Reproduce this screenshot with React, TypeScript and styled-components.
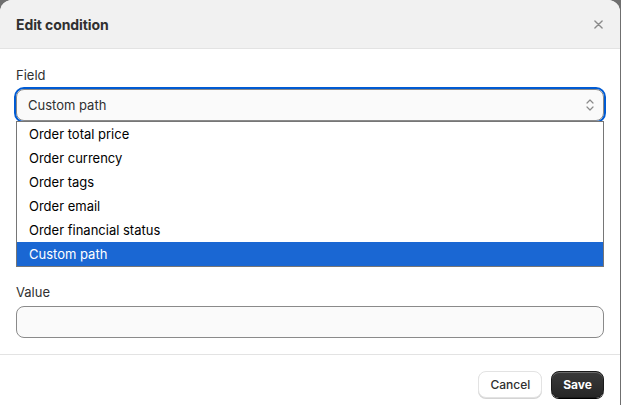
import React, { FC, useState } from 'react'
import styled, { createGlobalStyle } from 'styled-components'

const GlobalStyle = createGlobalStyle`
    html, body {
        margin: 0;
        padding: 0;
        background: #6f6f6f;
        font-family: Inter, "Noto Sans", "Liberation Sans", sans-serif;
        -webkit-font-smoothing: antialiased;
    }
`

const StyledModal = styled.div`
    width: 620px;
    height: 405px;
    background: #ffffff;
    border-radius: 12px 12px 0 0;
    overflow: hidden;
    display: flex;
    flex-direction: column;
    & > * {
        flex-shrink: 0;
    }
`
const StyledHeader = styled.div`
    height: 48px;
    background: #f1f1f1;
    border-bottom: 1px solid #e3e3e3;
    display: flex;
    align-items: center;
    justify-content: space-between;
    padding: 0 16px;
    box-sizing: content-box;
`
const StyledTitle = styled.h2`
    margin: 0;
    font-size: 14px;
    font-weight: 700;
    color: #303030;
    letter-spacing: -0.1px;
`
const StyledClose = styled.button`
    width: 20px;
    height: 20px;
    border: none;
    background: transparent;
    padding: 0;
    margin-right: -4px;
    display: flex;
    align-items: center;
    justify-content: center;
    cursor: pointer;
`
const StyledBody = styled.div`
    padding: 16px;
    display: flex;
    flex-direction: column;
    border-bottom: 1px solid #e3e3e3;
`
const StyledField = styled.div<{ $spaceAfter?: number }>`
    position: relative;
    display: flex;
    flex-direction: column;
    gap: 4px;
    margin-bottom: ${props => props.$spaceAfter || 0}px;
`
const StyledLabel = styled.label`
    font-size: 13px;
    line-height: 20px;
    color: #303030;
`
const StyledSelect = styled.div<{ $focused?: boolean }>`
    height: 32px;
    box-sizing: border-box;
    border: 1px solid #8a8a8a;
    border-radius: 8px;
    background: #fafafa;
    display: flex;
    align-items: center;
    justify-content: space-between;
    padding: 0 8px 0 11px;
    font-size: 13px;
    color: #303030;
    outline: ${props => props.$focused ? '2px solid #005bd3' : 'none'};
    outline-offset: 0;
`
const StyledInput = styled.input`
    height: 32px;
    box-sizing: border-box;
    border: 1px solid #8a8a8a;
    border-radius: 8px;
    background: #fafafa;
    padding: 0 12px;
    font-family: inherit;
    font-size: 13px;
    outline: none;
`
const StyledList = styled.ul`
    position: absolute;
    left: 0;
    right: 0;
    top: 56px;
    margin: 0;
    padding: 0;
    list-style: none;
    background: #ffffff;
    border: 1px solid #767676;
    z-index: 2;
`
const StyledOption = styled.li<{ $selected?: boolean }>`
    height: 24px;
    display: flex;
    align-items: center;
    padding-left: 12px;
    font-size: 13px;
    color: ${props => props.$selected ? '#ffffff' : '#000000'};
    background: ${props => props.$selected ? '#1a67d3' : 'transparent'};
`
const StyledFooter = styled.div`
    padding: 16px;
    display: flex;
    justify-content: flex-end;
    gap: 9px;
`
const StyledButton = styled.button<{ $primary?: boolean }>`
    height: 27px;
    padding: 0 11px;
    border-radius: 8px;
    font-family: inherit;
    font-size: 12px;
    font-weight: ${props => props.$primary ? 700 : 500};
    color: ${props => props.$primary ? '#ffffff' : '#303030'};
    background: ${props => props.$primary ? 'linear-gradient(#3a3a3a, #262626)' : '#ffffff'};
    border: 1px solid ${props => props.$primary ? '#1a1a1a' : '#e3e3e3'};
    box-shadow: ${props => props.$primary ? '0 1px 0 #000, inset 0 1px 0 rgba(255,255,255,0.25)' : '0 1px 0 #d4d4d4'};
    cursor: pointer;
`

const CloseIcon: FC = () => (
    <svg width="9" height="9" viewBox="0 0 10 10">
        <path d="M1 1L9 9M9 1L1 9" stroke="#8a8a8a" strokeWidth="1.5" strokeLinecap="round" />
    </svg>
)

const ChevronsIcon: FC = () => (
    <svg width="10" height="16" viewBox="0 0 10 16">
        <path d="M2 6L5 3L8 6M2 10L5 13L8 10" fill="none" stroke="#8a8a8a" strokeWidth="1.2" strokeLinecap="round" strokeLinejoin="round" />
    </svg>
)

const options = [
    'Order total price',
    'Order currency',
    'Order tags',
    'Order email',
    'Order financial status',
    'Custom path',
]

const App: FC = () => {
    const [field] = useState('Custom path')

    return (
        <>
            <GlobalStyle />
            <StyledModal>
                <StyledHeader>
                    <StyledTitle>Edit condition</StyledTitle>
                    <StyledClose aria-label="Close"><CloseIcon /></StyledClose>
                </StyledHeader>
                <StyledBody>
                    <StyledField $spaceAfter={161}>
                        <StyledLabel>Field</StyledLabel>
                        <StyledSelect $focused>
                            {field}
                            <ChevronsIcon />
                        </StyledSelect>
                        <StyledList>
                            {options.map(option => (
                                <StyledOption key={option} $selected={option === field}>{option}</StyledOption>
                            ))}
                        </StyledList>
                    </StyledField>
                    <StyledField>
                        <StyledLabel>Value</StyledLabel>
                        <StyledInput />
                    </StyledField>
                </StyledBody>
                <StyledFooter>
                    <StyledButton>Cancel</StyledButton>
                    <StyledButton $primary>Save</StyledButton>
                </StyledFooter>
            </StyledModal>
        </>
    )
}

export default App
